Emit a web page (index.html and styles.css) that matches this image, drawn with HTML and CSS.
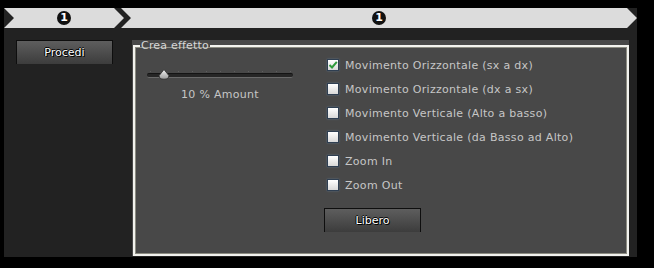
FILE: index.html
```html
<!DOCTYPE html>
<html lang="it">

<head>
    <meta charset="UTF-8">
    <title>Crea effetto</title>
    <link rel="stylesheet" href="styles.css">
</head>

<body>
    <div class="frame">
        <div class="steps">
            <div class="step first"><span class="num">1</span></div>
            <div class="step main"><span class="num">1</span></div>
        </div>
        <div class="content">
            <div class="side">
                <button class="btn">Procedi</button>
            </div>
            <div class="panel">
                <fieldset class="effect">
                    <legend>Crea effetto</legend>
                    <div class="effect-body">
                        <div class="amount">
                            <div class="slider">
                                <div class="ticks"></div>
                                <div class="track"></div>
                                <svg class="thumb" width="12" height="11" viewBox="0 0 12 11">
                                    <defs>
                                        <linearGradient id="thumbFill" x1="0" y1="0" x2="0" y2="1">
                                            <stop offset="0" stop-color="#f4f4f4" />
                                            <stop offset="1" stop-color="#9a9a9a" />
                                        </linearGradient>
                                    </defs>
                                    <path d="M6 0.5 L10.8 6.5 Q11.2 10.2 6 10.2 Q0.8 10.2 1.2 6.5 Z" fill="url(#thumbFill)" stroke="#2a2a2a" stroke-width="0.8" />
                                </svg>
                            </div>
                            <div class="amount-label">10 % Amount</div>
                        </div>
                        <div class="options">
                            <label class="opt"><span class="box">
                                    <svg width="10" height="10" viewBox="0 0 10 10">
                                        <path d="M1.5 5 L4 7.5 L8.8 1.8" fill="none" stroke="#2f9a3c" stroke-width="2" />
                                    </svg></span>Movimento Orizzontale (sx a dx)</label>
                            <label class="opt"><span class="box"></span>Movimento Orizzontale (dx a sx)</label>
                            <label class="opt"><span class="box"></span>Movimento Verticale (Alto a basso)</label>
                            <label class="opt"><span class="box"></span>Movimento Verticale (da Basso ad Alto)</label>
                            <label class="opt"><span class="box"></span>Zoom In</label>
                            <label class="opt"><span class="box"></span>Zoom Out</label>
                            <button class="btn free">Libero</button>
                        </div>
                    </div>
                </fieldset>
            </div>
        </div>
    </div>
</body>

</html>
```

FILE: styles.css
```css
:root {
    --frame: #222222;
    --bar: #dcdcdc;
    --panel: #484848;
    --text: #c6c6c6;
}

body {
    margin: 0;
    background-color: #000;
    font-family: "DejaVu Sans", Verdana, sans-serif;
    font-size: 11px;
    color: var(--text);
}

.frame {
    margin: 8px 0 0 4px;
    width: 633px;
    height: 249px;
    background-color: var(--frame);
}

.steps {
    display: flex;
    height: 20px;
}

.step {
    display: flex;
    align-items: center;
    justify-content: center;
    background-color: var(--bar);
}

.step.first {
    width: 120px;
    clip-path: polygon(0 0, 110px 0, 120px 50%, 110px 100%, 0 100%, 10px 50%);
}

.step.main {
    width: 516px;
    margin-left: -3px;
    clip-path: polygon(0 0, 506px 0, 100% 50%, 506px 100%, 0 100%, 10px 50%);
}

.num {
    width: 14px;
    height: 14px;
    border-radius: 50%;
    background-color: #111;
    color: #fff;
    font-weight: bold;
    font-size: 11px;
    line-height: 14px;
    text-align: center;
}

.content {
    display: flex;
    gap: 19px;
    padding: 12px 8px 0 12px;
}

.side {
    width: 97px;
}

.btn {
    display: block;
    width: 97px;
    height: 24px;
    padding: 0;
    border: 1px solid #0e0e0e;
    border-bottom: none;
    background: linear-gradient(#5e5e5e, #3c3c3c);
    font-family: "DejaVu Sans", Verdana, sans-serif;
    font-size: 11px;
    color: #fff;
    text-shadow: 1px 1px 0 #000, -1px 0 0 #000, 0 -1px 0 #000;
}

.panel {
    width: 497px;
    height: 216px;
    background-color: var(--panel);
}

.effect {
    box-sizing: border-box;
    margin: 0 0 0 1px;
    padding: 0;
    width: 496px;
    height: 216px;
    border: 2px solid #f2f2ee;
    box-shadow: inset 0 0 0 1px #8c8c82;
}

.effect legend {
    margin-left: 5px;
    padding: 0 1px;
    line-height: 12px;
    color: #d6d6d6;
    letter-spacing: 0.2px;
}

.effect-body {
    display: flex;
    gap: 31px;
}

.amount {
    width: 146px;
    margin: 16px 0 0 12px;
}

.slider {
    position: relative;
    height: 14px;
}

.ticks {
    position: absolute;
    left: 3px;
    right: 2px;
    top: 3px;
    height: 1px;
    background: repeating-linear-gradient(90deg, #5e5e5e 0 1px, transparent 1px 14px);
}

.track {
    position: absolute;
    left: 0;
    right: 0;
    top: 5px;
    height: 3px;
    border-radius: 2px;
    background-color: #262626;
    border-top: 1px solid #141414;
    border-bottom: 1px solid #6a6a6a;
}

.thumb {
    position: absolute;
    left: 11px;
    top: 1px;
}

.amount-label {
    margin-top: 6px;
    line-height: 14px;
    text-align: center;
    letter-spacing: 0.3px;
}

.options {
    margin-top: 1px;
}

.opt {
    display: flex;
    align-items: center;
    height: 24px;
    padding-left: 3px;
    white-space: nowrap;
    letter-spacing: 0.3px;
}

.box {
    display: flex;
    align-items: center;
    justify-content: center;
    box-sizing: border-box;
    width: 12px;
    height: 12px;
    margin-right: 6px;
    border: 1px solid #2f3f52;
    background: linear-gradient(#ffffff, #d8d8d8);
    box-shadow: 0 0 2px rgba(120, 160, 200, 0.45);
}

.btn.free {
    margin-top: 11px;
}
```
